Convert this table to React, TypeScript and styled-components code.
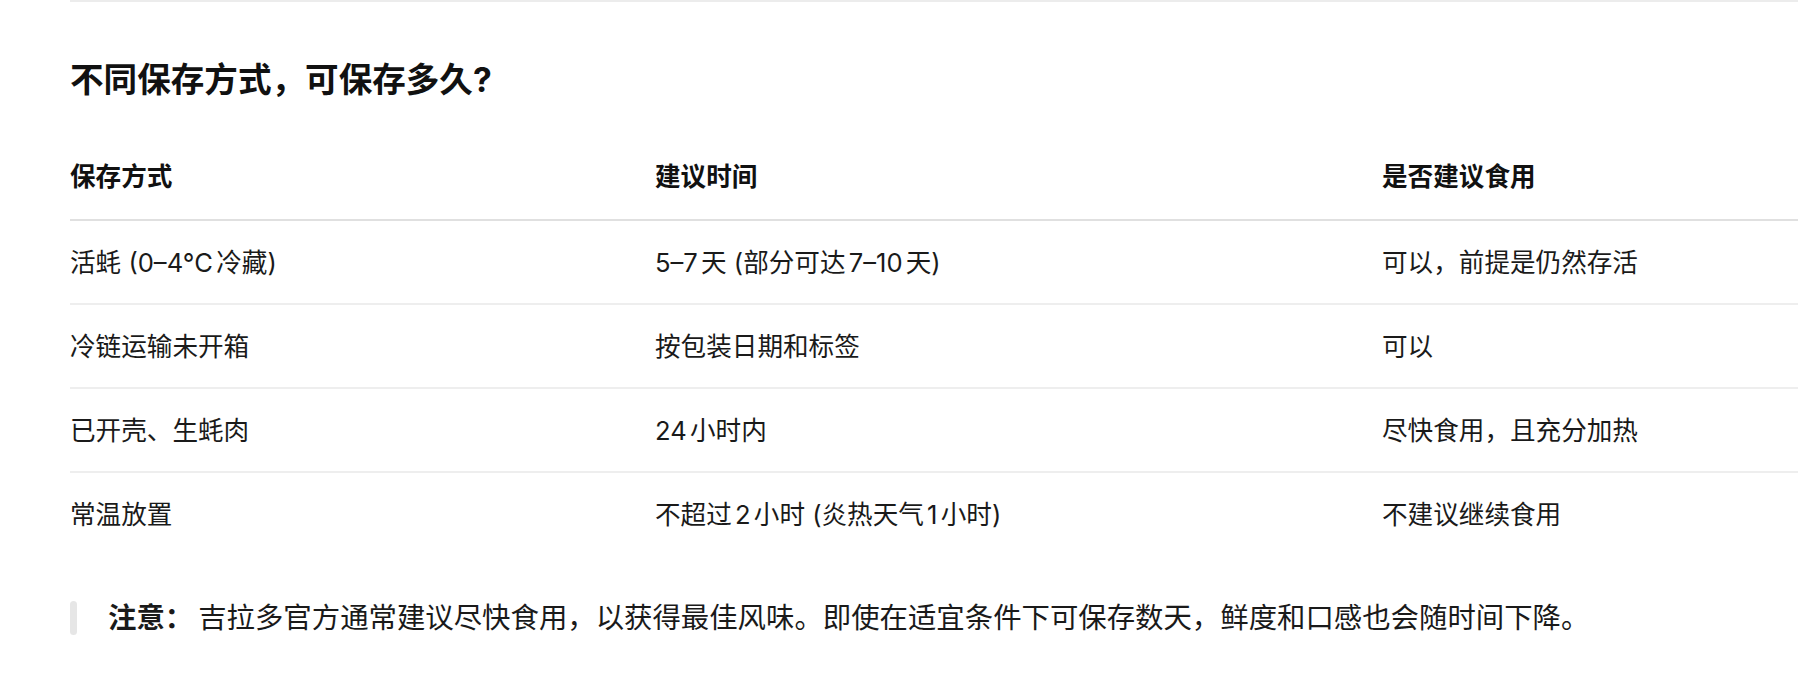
import styled, { createGlobalStyle } from 'styled-components';

const GlobalStyle = createGlobalStyle`
  html, body {
    margin: 0;
    padding: 0;
    background: #ffffff;
  }
  body {
    font-family: "Inter", "Noto Sans CJK SC", "Noto Sans", sans-serif;
    color: #1a1a1a;
    -webkit-font-smoothing: antialiased;
    text-autospace: normal;
  }
`;

const rows = [
  { method: '活蚝 (0–4°C冷藏)', time: '5–7天 (部分可达7–10天)', ok: '可以，前提是仍然存活' },
  { method: '冷链运输未开箱', time: '按包装日期和标签', ok: '可以' },
  { method: '已开壳、生蚝肉', time: '24小时内', ok: '尽快食用，且充分加热' },
  { method: '常温放置', time: '不超过2小时 (炎热天气1小时)', ok: '不建议继续食用' },
];

const Page = styled.main`
  padding-left: 70px;
  overflow: hidden;
`;

const Section = styled.section`
  border-top: 2px solid #ececec;
  padding-top: 56px;
`;

const Title = styled.h2`
  margin: 0;
  font-size: 33.6px;
  line-height: 44px;
  font-weight: 700;
  color: #111111;
`;

const Table = styled.table`
  width: 1728px;
  margin-top: 33px;
  border-collapse: collapse;
  table-layout: fixed;
`;

const HeadCell = styled.th`
  text-align: left;
  font-size: 25.6px;
  font-weight: 700;
  line-height: 41px;
  padding: 21px 0 22px;
  border-bottom: 2px solid #e0e0e0;
  color: #111111;
`;

const BodyRow = styled.tr<{ $last?: boolean }>`
  border-bottom: ${p => (p.$last ? 'none' : '2px solid #eeeeee')};
`;

const Cell = styled.td`
  font-size: 25.6px;
  font-weight: 400;
  line-height: 41px;
  padding: 21px 0 20px;
  color: #1a1a1a;
  white-space: nowrap;
`;

const Note = styled.div`
  display: flex;
  align-items: center;
  gap: 31px;
  margin-top: 41px;
`;

const Bar = styled.span`
  flex: none;
  width: 7px;
  height: 34px;
  border-radius: 4px;
  background: #e6e6e6;
`;

const NoteText = styled.p`
  margin: 0;
  font-size: 28.4px;
  line-height: 44px;
  color: #1a1a1a;

  strong {
    font-weight: 700;
    margin-right: 5px;
  }
`;

export default function App() {
  return (
    <>
      <GlobalStyle />
      <Page>
        <Section>
          <Title>不同保存方式，可保存多久?</Title>
          <Table>
            <colgroup>
              <col style={{ width: 585 }} />
              <col style={{ width: 727 }} />
              <col />
            </colgroup>
            <thead>
              <tr>
                <HeadCell>保存方式</HeadCell>
                <HeadCell>建议时间</HeadCell>
                <HeadCell>是否建议食用</HeadCell>
              </tr>
            </thead>
            <tbody>
              {rows.map((r, i) => (
                <BodyRow key={r.method} $last={i === rows.length - 1}>
                  <Cell>{r.method}</Cell>
                  <Cell>{r.time}</Cell>
                  <Cell>{r.ok}</Cell>
                </BodyRow>
              ))}
            </tbody>
          </Table>
          <Note>
            <Bar />
            <NoteText>
              <strong>注意：</strong>
              吉拉多官方通常建议尽快食用，以获得最佳风味。即使在适宜条件下可保存数天，鲜度和口感也会随时间下降。
            </NoteText>
          </Note>
        </Section>
      </Page>
    </>
  );
}
